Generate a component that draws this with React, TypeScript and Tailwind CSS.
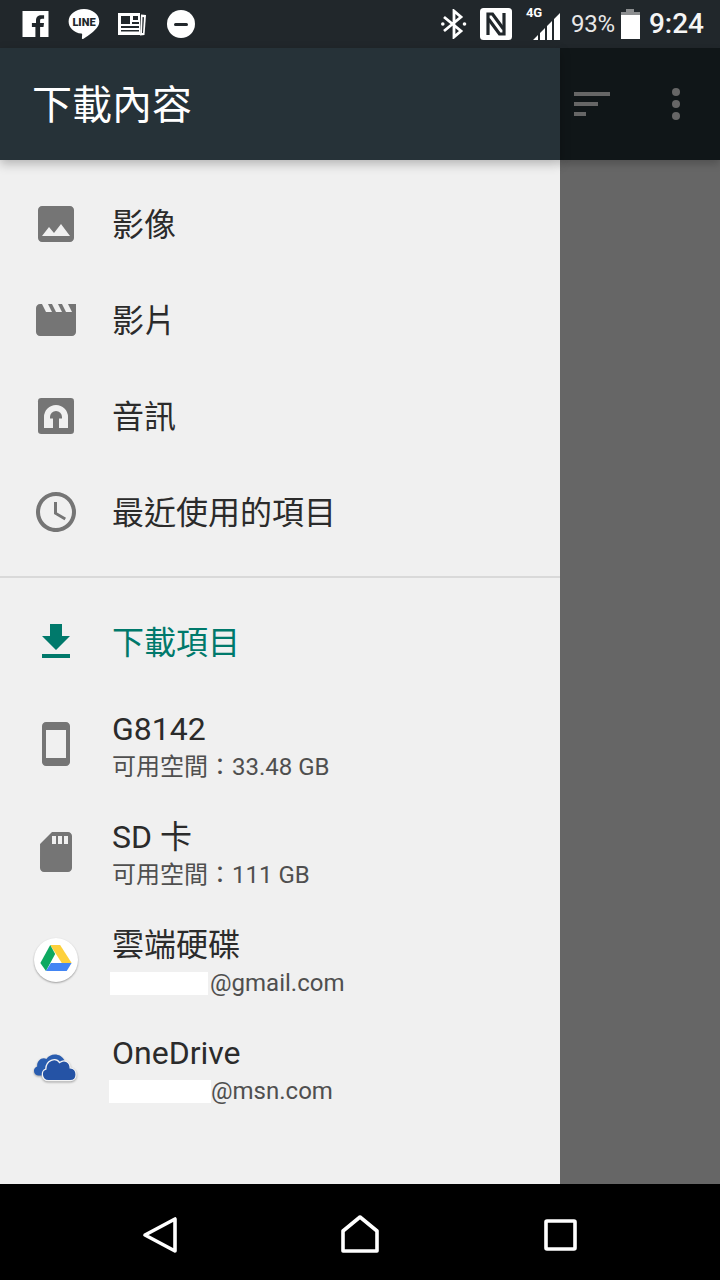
import type { ReactNode } from 'react'

const sansStack = 'font-["Roboto","Noto_Sans_CJK_TC",sans-serif]'

function MaterialIcon({ d, color = '#757575' }: { d: string; color?: string }) {
  return (
    <svg viewBox="0 0 24 24" className="h-12 w-12 shrink-0" fill={color}>
      <path d={d} />
    </svg>
  )
}

function AudioIcon() {
  return (
    <svg viewBox="0 0 24 24" className="h-12 w-12 shrink-0">
      <rect x="3" y="3" width="18" height="18" rx="1.6" fill="#757575" />
      <path
        fillRule="evenodd"
        d="M6 18v-5.500a6 6 0 0 1 12 0V18zM9 12.500a3 3 0 0 1 6 0v.8h-1.500V18h-3v-4.700H9z"
        fill="#f0f0f0"
      />
    </svg>
  )
}

function DriveIcon() {
  return (
    <div className="flex h-12 w-12 shrink-0 items-center justify-center">
      <div className="flex h-11 w-11 items-center justify-center rounded-full bg-white shadow-[0_1px_2px_rgba(0,0,0,0.35)]">
        <svg viewBox="0 0 95 79" className="-mt-1 h-[26px] w-8">
          <path d="M30 0h30l35 55H65z" fill="#fdd03b" />
          <path d="M30 0l15 27-28 52L0 55z" fill="#0da960" />
          <path d="M17 79h63l15-24H32z" fill="#4285f4" />
        </svg>
      </div>
    </div>
  )
}

function OneDriveIcon() {
  return (
    <div className="flex h-12 w-12 shrink-0 items-center pl-px">
      <svg viewBox="0 0 135 85" className="h-[28px] w-[45px] drop-shadow-[0_1px_1px_rgba(0,0,0,0.35)]">
        <path d="M15 65C0 65-3 42 12 38 10 22 25 8 40 15 52-5 85-3 95 20L50 65z" fill="#2a5db0" />
        <path
          d="M46 81C24 81 22 50 38 46 38 20 68 8 80 26 96 14 112 26 112 42 136 44 136 81 112 81z"
          fill="#2553a5"
          stroke="#f4f4f4"
          strokeWidth="4"
        />
      </svg>
    </div>
  )
}

function SimpleRow({ icon, label, active }: { icon: ReactNode; label: string; active?: boolean }) {
  return (
    <div className="flex h-24 items-center pl-8">
      {icon}
      <span className={`ml-8 mt-0.5 text-[32px] leading-none ${active ? 'text-[#00796b]' : 'text-[#2b2b2b]'}`}>{label}</span>
    </div>
  )
}

function RootRow({ icon, title, sub }: { icon: ReactNode; title: string; sub: ReactNode }) {
  return (
    <div className="flex h-[108px] items-center pl-8">
      {icon}
      <div className="ml-8 pt-1">
        <div className="text-[32px] leading-[38px] text-[#2b2b2b]">{title}</div>
        <div className="mt-1 text-2xl leading-[30px] text-[#4f4f4f]">{sub}</div>
      </div>
    </div>
  )
}

function StatusBar() {
  return (
    <div className="flex h-12 items-center justify-between bg-[#21272b] pl-[22px] pr-4">
      <div className="flex items-center">
        <svg viewBox="0 0 26 26" className="h-[26px] w-[27px]">
          <path
            d="M0 0h26v26h-8.400V16h3.400l.5-3.900h-3.900V9.700c0-1.100.3-1.900 1.900-1.900h2.100V4.300c-.4 0-1.600-.1-3-.1-3 0-5.100 1.800-5.100 5.200v2.700H9.400V16h3.500v10H0z"
            fill="#fff"
          />
        </svg>
        <svg viewBox="0 0 32 32" className="ml-[19px] h-8 w-8">
          <path d="M16 1C7.400 1 .6 6.600.6 13.400c0 6.200 5.400 11.200 12.800 12.200.9.2.8.8.7 1.600l-.2 3.400c0 .6.8.7 1.600.1 2.700-1.800 9-6 11.600-9 2.400-2.400 4.200-4.800 4.200-8.300C31.400 6.600 24.600 1 16 1z" fill="#fff" />
          <text x="16" y="17.500" textAnchor="middle" fontSize="11" fontWeight="900" fill="#21272b" fontFamily="Roboto, sans-serif">LINE</text>
        </svg>
        <svg viewBox="0 0 30 28" className="ml-[17px] h-7 w-[30px]" fill="none">
          <path d="M1 3h22v22H1z" fill="#fff" />
          <path d="M24 4.500 29 5l-1.500 20-4.500.5z" fill="#fff" />
          <path d="M4 6h9v8H4zM16 6h5v4h-5z" fill="#21272b" />
          <path d="M15 12h7v2h-7zM4 16h18v2H4zM4 20h18v1.500H4z" fill="#21272b" />
          <path d="M25.500 7l1.500.2-1 15.800h-1z" fill="#21272b" />
        </svg>
        <div className="ml-5 flex h-7 w-7 items-center justify-center rounded-full bg-white">
          <div className="h-[3px] w-[14px] rounded-sm bg-[#21272b]" />
        </div>
      </div>
      <div className="flex items-center">
        <svg viewBox="0 0 26 30" className="mr-[13px] h-[30px] w-[26px]" fill="none" stroke="#fff" strokeWidth="2.800">
          <path d="M3 8l17 14-7 6V2l7 6L3 22" />
          <circle cx="1.800" cy="15" r="1.800" fill="#fff" stroke="none" />
          <circle cx="23.500" cy="15" r="1.800" fill="#fff" stroke="none" />
        </svg>
        <svg viewBox="0 0 32 32" className="h-8 w-8" fill="none">
          <rect width="32" height="32" rx="3.500" fill="#fff" />
          <path d="M8 27V6h4.500l11 15" stroke="#21272b" strokeWidth="3.200" />
          <path d="M24 5v21h-4.500L8.500 11" stroke="#21272b" strokeWidth="3.200" />
        </svg>
        <div className="relative ml-[14px] h-8 w-9">
          <span className="absolute left-0 top-[-2px] text-[13px] font-bold leading-[14px] text-white">4G</span>
          <svg viewBox="0 0 30 30" className="absolute bottom-0 right-0 h-[30px] w-[30px]" fill="#fff">
            <path d="M1 30l5-5v5zM8 30v-7l5-5v12zM15 30V16l5-5v19zM22 30V9l6-6v27z" />
          </svg>
        </div>
        <span className="ml-[9px] text-2xl leading-none tracking-[-0.2px] text-[#e8e8e8]">93%</span>
        <div className="ml-1.5 flex w-[19px] flex-col items-center">
          <div className="h-[3px] w-2 bg-[#8b8d8f]" />
          <div className="h-[3px] w-[19px] bg-[#8b8d8f]" />
          <div className="h-6 w-[19px] bg-white" />
        </div>
        <span className="ml-[9px] text-[28px] font-medium leading-none text-[#f5f5f5]">9:24</span>
      </div>
    </div>
  )
}

export default function App() {
  return (
    <div className={`flex h-[1280px] w-[720px] flex-col overflow-hidden bg-[#666666] ${sansStack}`}>
      <StatusBar />
      <div className="flex min-h-0 flex-1">
        <aside className="flex w-[560px] flex-col bg-[#f0f0f0]">
          <header className="z-10 flex h-28 items-center bg-[#263238] pl-8 shadow-[0_4px_10px_rgba(0,0,0,0.25)]">
            <h1 className="mt-[3px] text-[40px] font-normal leading-none text-white">下載內容</h1>
          </header>
          <nav className="pt-4">
            <SimpleRow
              icon={<MaterialIcon d="M21 19V5c0-1.100-.9-2-2-2H5c-1.100 0-2 .9-2 2v14c0 1.100.9 2 2 2h14c1.100 0 2-.9 2-2zM8.500 13.500l2.500 3.010L14.500 12l4.500 6H5l3.500-4.500z" />}
              label="影像"
            />
            <SimpleRow
              icon={<MaterialIcon d="M18 4l2 4h-3l-2-4h-2l2 4h-3l-2-4H8l2 4H7L5 4H4c-1.100 0-1.990.9-1.990 2L2 18c0 1.100.9 2 2 2h16c1.100 0 2-.9 2-2V4h-4z" />}
              label="影片"
            />
            <SimpleRow icon={<AudioIcon />} label="音訊" />
            <SimpleRow
              icon={<MaterialIcon d="M11.990 2C6.470 2 2 6.480 2 12s4.470 10 9.990 10C17.520 22 22 17.520 22 12S17.520 2 11.990 2zM12 20c-4.420 0-8-3.580-8-8s3.580-8 8-8 8 3.580 8 8-3.580 8-8 8zm.5-13H11v6l5.250 3.150.75-1.230-4.500-2.670z" />}
              label="最近使用的項目"
            />
          </nav>
          <div className="mt-4 h-0.5 bg-[#d9d9d9]" />
          <div className="pt-4">
            <SimpleRow
              icon={<MaterialIcon color="#00796b" d="M19 9h-4V3H9v6H5l7 7 7-7zM5 18v2h14v-2H5z" />}
              label="下載項目"
              active
            />
          </div>
          <div>
            <RootRow
              icon={<MaterialIcon d="M17 1.010 7 1c-1.100 0-2 .9-2 2v18c0 1.100.9 2 2 2h10c1.100 0 2-.9 2-2V3c0-1.100-.9-1.990-2-1.990zM17 19H7V5h10v14z" />}
              title="G8142"
              sub="可用空間：33.48 GB"
            />
            <RootRow
              icon={<MaterialIcon d="M18 2h-8L4.020 8 4 20c0 1.100.9 2 2 2h12c1.100 0 2-.9 2-2V4c0-1.100-.9-2-2-2zm-6 6h-2V4h2v4zm3 0h-2V4h2v4zm3 0h-2V4h2v4z" />}
              title="SD 卡"
              sub="可用空間：111 GB"
            />
            <RootRow
              icon={<DriveIcon />}
              title="雲端硬碟"
              sub={
                <span className="flex items-center">
                  <span className="-ml-0.5 h-[23px] w-[98px] bg-white" />
                  <span className="ml-0.5">@gmail.com</span>
                </span>
              }
            />
            <RootRow
              icon={<OneDriveIcon />}
              title="OneDrive"
              sub={
                <span className="flex items-center">
                  <span className="-ml-[3px] h-[23px] w-[102px] bg-white" />
                  <span>@msn.com</span>
                </span>
              }
            />
          </div>
        </aside>
        <div className="flex-1">
          <div className="relative flex h-28 items-center bg-[#101618] pl-[14px] shadow-[0_4px_8px_rgba(0,0,0,0.2)]">
            <div className="flex flex-col gap-1.5">
              <div className="h-1 w-9 bg-[#666666]" />
              <div className="h-1 w-6 bg-[#666666]" />
              <div className="h-1 w-3 bg-[#666666]" />
            </div>
            <div className="ml-[62px] flex flex-col gap-1">
              <div className="h-2 w-2 rounded-full bg-[#666666]" />
              <div className="h-2 w-2 rounded-full bg-[#666666]" />
              <div className="h-2 w-2 rounded-full bg-[#666666]" />
            </div>
          </div>
        </div>
      </div>
      <footer className="flex h-24 items-center bg-black">
        <svg viewBox="0 0 720 96" className="h-24 w-[720px]" fill="none" stroke="#fff" strokeWidth="3.600" strokeLinejoin="round">
          <path d="M175 35v32l-30-16z" />
          <path d="M343 67V47l17-14 17 14v20z" />
          <rect x="546" y="37" width="29" height="28" rx="1" />
        </svg>
      </footer>
    </div>
  )
}
